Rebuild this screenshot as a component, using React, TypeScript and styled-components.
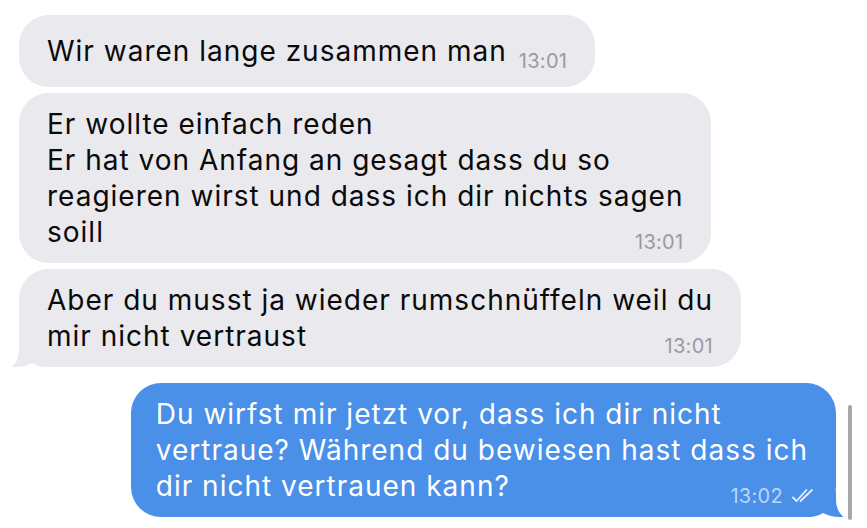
import styled, { createGlobalStyle } from "styled-components"

const GlobalStyle = createGlobalStyle`
  html, body {
    margin: 0;
    padding: 0;
    background: #ffffff;
  }
  body {
    font-family: Inter, "Liberation Sans", sans-serif;
    -webkit-font-smoothing: antialiased;
  }
`

const Thread = styled.div`
  position: relative;
  box-sizing: border-box;
  width: 867px;
  height: 528px;
  overflow: hidden;
  padding: 15px 31px 0 19px;
  display: flex;
  flex-direction: column;
  align-items: flex-start;
  gap: 6px;
`

const Bubble = styled.div<{ $out?: boolean }>`
  position: relative;
  isolation: isolate;
  box-sizing: border-box;
  min-height: 72px;
  padding: 13px 28px 13px ${(p) => (p.$out ? "25px" : "28px")};
  display: flex;
  flex-direction: column;
  justify-content: center;
  border-radius: 30px;
  background: ${(p) => (p.$out ? "#4a8fe8" : "#e9e9ee")};
  color: ${(p) => (p.$out ? "#ffffff" : "#0a0a0a")};
  align-self: ${(p) => (p.$out ? "flex-end" : "flex-start")};
  margin-top: ${(p) => (p.$out ? "10px" : "0")};
  font-size: 28px;
  line-height: 36px;
  letter-spacing: 1px;
`

const Lines = styled.div`
  white-space: pre;
`

const LastRow = styled.div`
  display: flex;
  align-items: flex-end;
  justify-content: space-between;
  gap: 12px;
  white-space: pre;
`

const Time = styled.span<{ $out?: boolean }>`
  flex-shrink: 0;
  display: flex;
  align-items: center;
  gap: 8px;
  font-size: 20px;
  line-height: 16px;
  letter-spacing: 0.3px;
  color: ${(p) => (p.$out ? "rgba(255, 255, 255, 0.65)" : "#9a9aa0")};
  margin-right: ${(p) => (p.$out ? "-7px" : "0")};
`

const TailSvg = styled.svg<{ $out?: boolean }>`
  position: absolute;
  z-index: -1;
  bottom: 0;
  width: 40px;
  height: 26px;
  ${(p) => (p.$out ? "right: -8px; transform: scaleX(-1);" : "left: -8px;")}
`

const ScrollThumb = styled.div`
  position: absolute;
  right: 15px;
  bottom: 8px;
  width: 4px;
  height: 115px;
  border-radius: 2px;
  background: #a8a8a8;
`

function Tail({ out }: { out?: boolean }) {
  return (
    <TailSvg $out={out} viewBox="0 0 40 26">
      <path
        d="M8 0 L8 8 C8 17 5 22 0.5 26 C8 26.5 15 25 21 22 C25 24.5 30 26 36 26 L40 26 L40 0 Z"
        fill={out ? "#4a8fe8" : "#e9e9ee"}
      />
    </TailSvg>
  )
}

function ReadTicks() {
  return (
    <svg width="24" height="16" viewBox="0 0 24 16" fill="none">
      <path d="M2 9.5 L5.5 13 L15.5 2" stroke="rgba(255,255,255,0.85)" strokeWidth="1.8" strokeLinecap="round" strokeLinejoin="round" />
      <path d="M9.5 13 L21 2" stroke="rgba(255,255,255,0.85)" strokeWidth="1.8" strokeLinecap="round" />
    </svg>
  )
}

export default function App() {
  return (
    <>
      <GlobalStyle />
      <Thread>
        <Bubble>
          <LastRow>
            <span>Wir waren lange zusammen man</span>
            <Time>13:01</Time>
          </LastRow>
        </Bubble>
        <Bubble>
          <Lines>{"Er wollte einfach reden\nEr hat von Anfang an gesagt dass du so\nreagieren wirst und dass ich dir nichts sagen"}</Lines>
          <LastRow>
            <span>soill</span>
            <Time>13:01</Time>
          </LastRow>
        </Bubble>
        <Bubble>
          <Tail />
          <Lines>{"Aber du musst ja wieder rumschnüffeln weil du"}</Lines>
          <LastRow>
            <span>mir nicht vertraust</span>
            <Time>13:01</Time>
          </LastRow>
        </Bubble>
        <Bubble $out>
          <Tail out />
          <Lines>{"Du wirfst mir jetzt vor, dass ich dir nicht\nvertraue? Während du bewiesen hast dass ich"}</Lines>
          <LastRow>
            <span>dir nicht vertrauen kann?</span>
            <Time $out>
              13:02
              <ReadTicks />
            </Time>
          </LastRow>
        </Bubble>
        <ScrollThumb />
      </Thread>
    </>
  )
}
